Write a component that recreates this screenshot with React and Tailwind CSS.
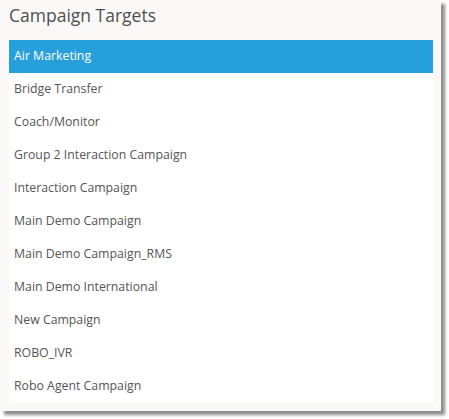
const campaigns = [
  'Air Marketing',
  'Bridge Transfer',
  'Coach/Monitor',
  'Group 2 Interaction Campaign',
  'Interaction Campaign',
  'Main Demo Campaign',
  'Main Demo Campaign_RMS',
  'Main Demo International',
  'New Campaign',
  'ROBO_IVR',
  'Robo Agent Campaign',
];

export default function App() {
  const selected = 'Air Marketing';

  return (
    <div className="w-[449px] h-[419px] bg-white" style={{ fontFamily: '"Open Sans", "Noto Sans", sans-serif' }}>
      <div className="w-[441px] h-[411px] bg-[#faf9f8] shadow-[4px_4px_3px_rgba(0,0,0,0.45)] flex flex-col">
        <div className="h-[40px] pl-[9px] pt-[2px] text-[17.5px] leading-[26px] text-[#4f4f4f]">
          Campaign Targets
        </div>
        <ul className="mx-[9px] mr-[8px] bg-white">
          {campaigns.map((name) => (
            <li
              key={name}
              className={`h-[33px] flex items-center pl-[5px] text-[12.3px] ${
                name === selected ? 'bg-[#279fdb] text-white' : 'text-[#555555]'
              }`}
            >
              {name}
            </li>
          ))}
        </ul>
      </div>
    </div>
  );
}
